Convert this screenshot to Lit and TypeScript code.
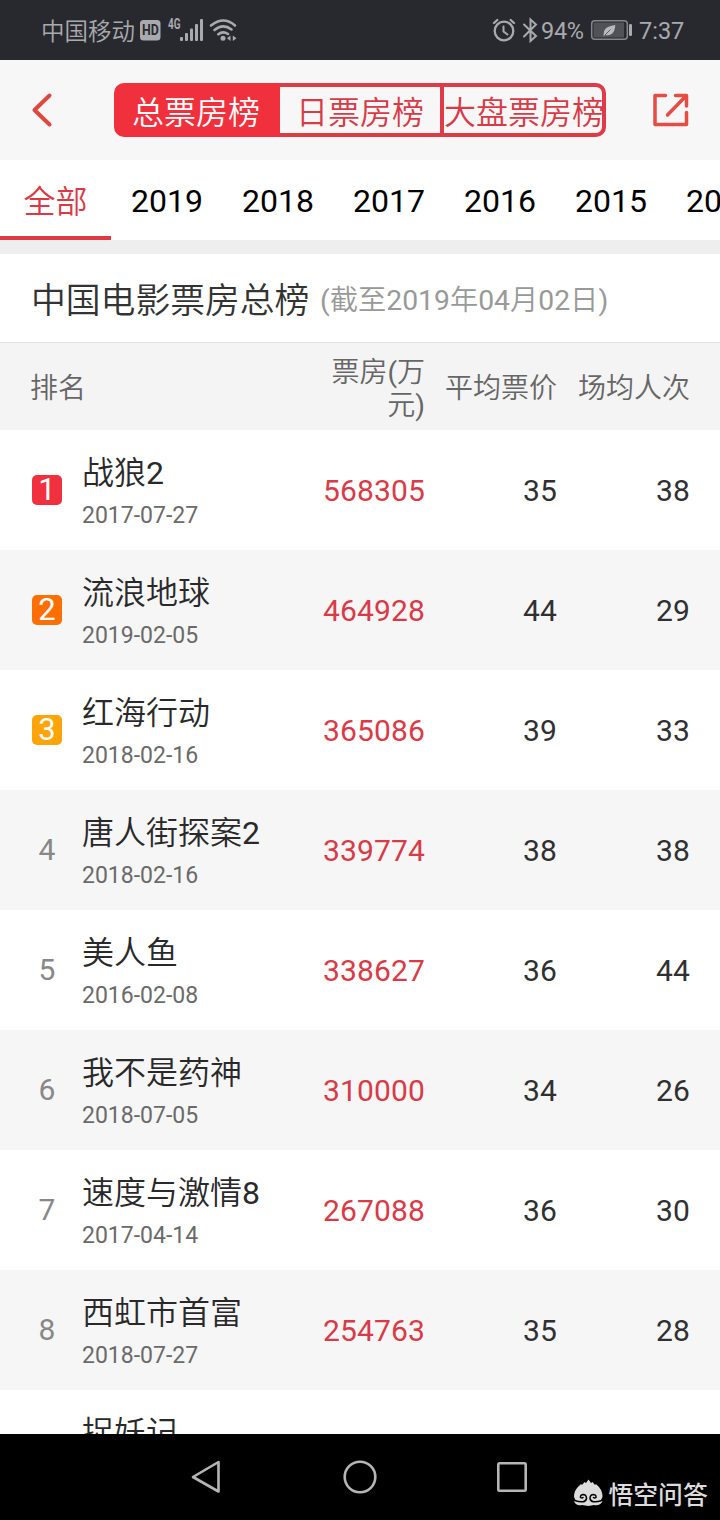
import { LitElement, html, css } from "lit";
import { customElement, property } from "lit/decorators.js";
import { classMap } from "lit/directives/class-map.js";

interface Movie {
  rank: number;
  name: string;
  date: string;
  gross: string;
  price: string;
  people: string;
}

const MOVIES: Movie[] = [
  { rank: 1, name: "战狼2", date: "2017-07-27", gross: "568305", price: "35", people: "38" },
  { rank: 2, name: "流浪地球", date: "2019-02-05", gross: "464928", price: "44", people: "29" },
  { rank: 3, name: "红海行动", date: "2018-02-16", gross: "365086", price: "39", people: "33" },
  { rank: 4, name: "唐人街探案2", date: "2018-02-16", gross: "339774", price: "38", people: "38" },
  { rank: 5, name: "美人鱼", date: "2016-02-08", gross: "338627", price: "36", people: "44" },
  { rank: 6, name: "我不是药神", date: "2018-07-05", gross: "310000", price: "34", people: "26" },
  { rank: 7, name: "速度与激情8", date: "2017-04-14", gross: "267088", price: "36", people: "30" },
  { rank: 8, name: "西虹市首富", date: "2018-07-27", gross: "254763", price: "35", people: "28" },
];

@customElement("status-bar")
class StatusBar extends LitElement {
  static styles = css`
    :host { display: flex; height: 60px; background: #28292e; color: #a9aaae; box-sizing: border-box;
      padding: 0 36px 0 41px; align-items: center; justify-content: space-between;
      font: 400 23.5px/60px Roboto, "Noto Sans CJK SC", sans-serif; }
    .group { display: flex; align-items: center; height: 60px; }
    .carrier { font-weight: 350; padding-top: 3px; }
    .time { width: 45px; padding-top: 1px; white-space: nowrap; }
    .pct { width: 43px; white-space: nowrap; padding-top: 1px; letter-spacing: -0.3px; }
    svg { display: block; flex: none; }
    .tiny { font: 700 14px "Roboto", sans-serif; }
  `;
  render() {
    return html`
      <div class="group">
        <span class="carrier">中国移动</span>
        <svg width="105" height="60" viewBox="135 0 105 60" fill="#a9aaae">
          <rect x="140" y="20" width="20.5" height="20.5" rx="3.5" />
          <text x="142" y="35.2" class="tiny" fill="#28292e" textLength="16.8" lengthAdjust="spacingAndGlyphs">HD</text>
          <text x="168" y="29" class="tiny" textLength="12.5" lengthAdjust="spacingAndGlyphs">4G</text>
          <rect x="180" y="37" width="3" height="4" rx="1" />
          <rect x="185" y="33" width="3" height="8" rx="1" />
          <rect x="190" y="28.500" width="3" height="12.500" rx="1" />
          <rect x="195" y="24" width="3" height="17" rx="1" />
          <rect x="200" y="19" width="3" height="22" rx="1" />
          <g fill="none" stroke="#a9aaae" stroke-width="2.6" stroke-linecap="round">
            <path d="M211 25.500Q223.500 15.500 235 25.500" />
            <path d="M214.500 30Q223 23 231.500 29.500" />
            <path d="M218.300 34.300Q223 30.500 228 34" />
          </g>
          <circle cx="223" cy="38.300" r="2.500" />
          <path d="M230.500 35.500v5.500l-3.500-2.750zM232.800 35.500v5.500l3.700-2.750z" />
        </svg>
      </div>
      <div class="group">
        <svg width="49" height="60" viewBox="492 0 49 60" fill="none" stroke="#a9aaae" stroke-linecap="round">
          <circle cx="504" cy="31" r="9.300" stroke-width="2.300" />
          <path d="M503.500 26.500v5l4 3" stroke-width="2" />
          <path d="M494 23l3.300-3M514 23l-3.300-3" stroke-width="2.300" />
          <path d="M524 24.500L536 36l-5.500 5V19.500l5.500 5L524 36.500" stroke-width="2" />
        </svg>
        <span class="pct">94%</span>
        <svg width="55" height="60" viewBox="584 0 55 60">
          <rect x="591.700" y="20.700" width="35.600" height="18.600" rx="3" fill="#28292e" stroke="#85868a" stroke-width="1.500" />
          <rect x="593.500" y="22.500" width="30.500" height="15" fill="#515257" />
          <path d="M603.800 36.500Q603 30 607 27.500Q610 25.500 615.300 25Q615 31.500 611.500 34Q608.500 36 605.500 35Z" fill="#b8b9bc" />
          <path d="M604.500 35.500L610.500 29.500" stroke="#515257" stroke-width="0.900" />
          <rect x="629" y="24" width="3" height="12" rx="1.200" fill="#a9aaae" />
        </svg>
        <span class="time">7:37</span>
      </div>`;
  }
}

@customElement("movie-row")
class MovieRow extends LitElement {
  @property({ attribute: false }) movie!: Movie;
  static styles = css`
    :host { display: block; }
    .row { display: grid; grid-template-columns: 30px 192px 171px 132px 133px; height: 120px;
      padding-left: 32px; align-items: center; color: #303032;
      font: 400 30px/36px Roboto, "Noto Sans CJK SC DemiLight", "Noto Sans CJK SC", sans-serif; }
    .even { background: #f6f6f6; }
    .rank { text-align: center; color: #888; }
    .badge { color: #fff; height: 30px; line-height: 30px; border-radius: 5px; font-size: 31px; }
    .r1 { background: #f1303f; }
    .r2 { background: #fd6f02; }
    .r3 { background: #fda409; }
    .info { padding: 2px 0 0 20px; display: flex; flex-direction: column; }
    .name { font-size: 32px; line-height: 44px; white-space: nowrap; color: #29292b; }
    .date { font-size: 23px; line-height: 30px; height: 30px; color: #6a6a6a; margin-top: 6px; }
    .num { text-align: right; padding-top: 1px; letter-spacing: 0.12px; white-space: nowrap; }
    .gross { color: #d83b47; }
  `;
  render() {
    const m = this.movie;
    const top = m.rank <= 3;
    return html`<div class=${classMap({ row: true, even: m.rank % 2 === 0 })}>
      <div class=${classMap({ rank: true, badge: top, [`r${m.rank}`]: top })}>${m.rank < 9 ? m.rank : ""}</div>
      <div class="info"><span class="name">${m.name}</span><span class="date">${m.date}</span></div>
      <div class="num gross">${m.gross}</div>
      <div class="num">${m.price}</div>
      <div class="num">${m.people}</div>
    </div>`;
  }
}

@customElement("app-root")
class AppRoot extends LitElement {
  static styles = css`
    :host { display: flex; flex-direction: column; width: 720px; height: 1520px; overflow: hidden; background: #fff;
      font-family: Roboto, "Noto Sans CJK SC DemiLight", "Noto Sans CJK SC", sans-serif; font-weight: 400; }
    svg { display: block; flex: none; }
    .top { display: flex; height: 100px; background: #f7f7f7; align-items: center; flex: none; }
    .segments { display: flex; width: 492px; height: 54px; font-size: 32px; line-height: 52px; color: #d83b47; }
    .seg { display: flex; justify-content: center; white-space: nowrap; box-sizing: border-box; height: 54px; flex: none;
      border: 4px solid #df3a47; }
    .seg1 { width: 166px; background: #f1303d; color: #fff; border-color: #f1303d; border-radius: 10px 0 0 10px; padding-right: 2px; }
    .seg2 { width: 160px; border-width: 4px 0; }
    .seg3 { width: 166px; border-radius: 0 10px 10px 0; padding-left: 2px; }
    .tabs { display: flex; height: 80px; flex: none; overflow: hidden; color: #000; font-size: 32px; line-height: 82px; }
    .tab { flex: none; width: 111px; text-align: center; box-sizing: border-box; height: 80px; padding-left: 1px; }
    .on { color: #d83b47; border-bottom: 4px solid #df3a43; line-height: 84px; padding: 0; }
    .gap { height: 14px; background: #eee; flex: none; }
    .title { display: flex; height: 88px; flex: none; border-bottom: 1px solid #e2e2e2; padding-left: 31px; line-height: 93px;
      white-space: nowrap; }
    .main { font-size: 34.8px; line-height: 94px; color: #333; width: 289px; }
    .sub { font-size: 28.3px; color: #999; }
    .head { display: grid; grid-template-columns: 286px 109px 132px 133px; padding: 4px 0 0 30px; height: 87px; flex: none;
      box-sizing: border-box; align-items: center; background: #f4f4f4; color: #666; font-size: 28px; line-height: 33px; }
    .r { text-align: right; white-space: nowrap; }
    .list { flex: 1; overflow: hidden; min-height: 0; }
    .nav { height: 86px; flex: none; background: #000; display: flex; }
    .mark { font: 500 24.8px "Noto Sans CJK SC", sans-serif; }
  `;
  render() {
    return html`
      <status-bar></status-bar>
      <div class="top">
        <svg width="114" height="100" viewBox="0 60 114 100" fill="none" stroke="#df4840" stroke-width="4" stroke-linecap="round" stroke-linejoin="round">
          <path d="M49.500 95.500L34.500 110L49.500 124.500" />
        </svg>
        <div class="segments">
          <div class="seg seg1">总票房榜</div>
          <div class="seg seg2">日票房榜</div>
          <div class="seg seg3">大盘票房榜</div>
        </div>
        <svg width="114" height="100" viewBox="606 60 114 100" fill="none" stroke="#e54c42" stroke-width="3.500" stroke-linecap="round" stroke-linejoin="round">
          <path d="M665.500 95.500H655V124.500H686.500V112.500" />
          <path d="M675.500 95.500H686.500V106M686 96L667.500 115" />
        </svg>
      </div>
      <div class="tabs">
        <div class="tab on">全部</div>
        ${[2019, 2018, 2017, 2016, 2015, 2014].map((y) => html`<div class="tab">${y}</div>`)}
      </div>
      <div class="gap"></div>
      <div class="title"><span class="main">中国电影票房总榜</span><span class="sub">(截至2019年04月02日)</span></div>
      <div class="head">
        <div>排名</div>
        <div class="r">票房(万<br />元)</div>
        <div class="r">平均票价</div>
        <div class="r">场均人次</div>
      </div>
      <div class="list">
        ${MOVIES.map((m) => html`<movie-row .movie=${m}></movie-row>`)}
        <movie-row .movie=${{ rank: 9, name: "捉妖记", date: "", gross: "", price: "", people: "" }}></movie-row>
      </div>
      <div class="nav">
        <svg width="720" height="86" viewBox="0 1434 720 86" fill="none" stroke="#b5b5b5" stroke-width="2.600" stroke-linejoin="round">
          <path d="M218.500 1462V1491.500L193 1477Z" />
          <circle cx="360" cy="1477" r="15.300" />
          <rect x="498.300" y="1463.300" width="27.400" height="27.400" rx="1.200" />
          <g stroke="none" fill="#dcdcdc">
            <path d="M574 1497C574 1490 578 1487 581 1484L582 1485L584.500 1482L586 1483L588.500 1479.500L591 1483L592.500 1482L595 1485L596 1484C599 1487 602.500 1490 602.500 1497L601 1500L602.500 1501.500Q600 1506 594 1505L588.500 1506L582 1505Q576 1506 574 1501.500L575.500 1500Z" />
            <text class="mark" x="608.500" y="1504">悟空问答</text>
          </g>
          <g stroke="#000" stroke-width="1.500" stroke-linecap="round">
            <path d="M574.500 1500.500Q585.500 1504 586.500 1498.500Q586.500 1494.500 583 1494.500Q580 1495 580.500 1497.500Q582 1498.500 583 1497.500" />
            <path d="M602 1500.500Q591 1504 590 1498.500Q590 1494.500 593.500 1494.500Q596.500 1495 596 1497.500Q594.500 1498.500 593.500 1497.500" />
          </g>
        </svg>
      </div>`;
  }
}
